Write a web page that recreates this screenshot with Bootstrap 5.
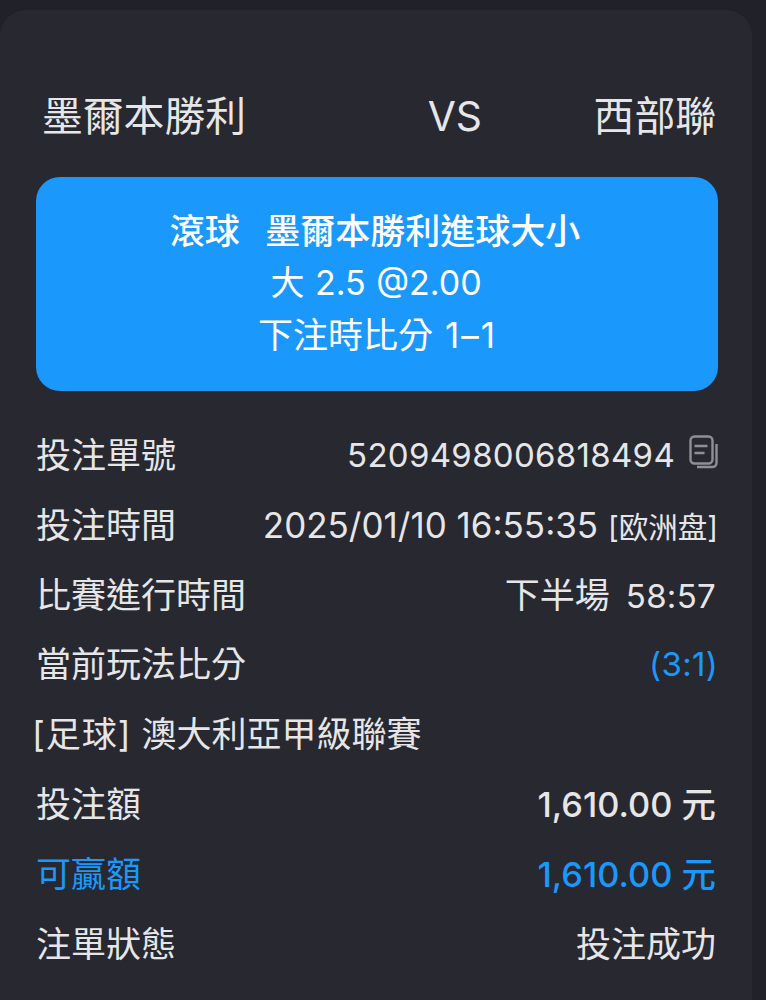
<!DOCTYPE html>
<html>
<head>
    <title>注單詳情</title>
    <link href="https://cdn.jsdelivr.net/npm/bootstrap@5.3.0/dist/css/bootstrap.min.css" rel="stylesheet">
    <style>
        html, body {
            height: 1000px;
            overflow: hidden;
        }
        body {
            background-color: #202129;
            font-family: "Inter", "Noto Sans CJK TC", sans-serif;
            color: #e6e6e8;
            margin: 0;
        }
        .sheet {
            margin: 10px 14px 0 0;
            height: 990px;
            padding: 0 34px 0 36px;
            background-color: #272830;
            border-radius: 26px 26px 0 0;
        }
        .teams {
            padding: 0 2px 0 6px;
            height: 167px;
            padding-top: 78px;
            font-size: 40.8px;
            line-height: 56px;
        }
        .teams-vs {
            margin-left: 70px;
        }
        .bet-box {
            height: 214px;
            background-color: #1a98fb;
            border-radius: 24px;
            color: #fff;
            font-size: 35px;
            line-height: 52px;
            padding-top: 28px;
        }
        .bet-title {
            font-weight: 500;
            word-spacing: 16px;
            margin-left: -4px;
        }
        .bet-odds {
            font-size: 34px;
            word-spacing: 1px;
            margin-left: -2px;
        }
        .bet-score {
            word-spacing: 2px;
            margin-left: 1px;
        }
        .score-val {
            letter-spacing: 2px;
        }
        .rows {
            padding: 30px 2px 0 0;
        }
        .info-row {
            height: 69.8px;
            font-size: 35px;
            line-height: 69px;
        }
        .num {
            font-size: 33px;
            letter-spacing: 0.3px;
        }
        .flush {
            margin-right: -2px;
        }
        .period {
            margin-right: 16px;
        }
        .accent {
            color: #1a98fb;
        }
        .strong-val {
            font-size: 34.4px;
            font-weight: 500;
        }
        .tag {
            font-size: 29.5px;
        }
        .copy-icon {
            width: 29px;
            height: 34px;
            margin-left: 14px;
            margin-top: 14px;
        }
        .league {
            margin-left: -4px;
        }
        .league-tag {
            letter-spacing: 1px;
        }
    </style>
</head>
<body>
    <div class="sheet">
        <div class="teams d-flex justify-content-between">
            <span>墨爾本勝利</span>
            <span class="teams-vs">VS</span>
            <span>西部聯</span>
        </div>
        <div class="bet-box text-center">
            <div class="bet-title">滾球 墨爾本勝利進球大小</div>
            <div class="bet-odds">大 2.5 @2.00</div>
            <div class="bet-score">下注時比分 <span class="score-val">1–1</span></div>
        </div>
        <div class="rows">
            <div class="info-row d-flex justify-content-between">
                <span>投注單號</span>
                <span class="d-flex align-items-start flush"><span class="num">5209498006818494</span>
                    <svg class="copy-icon" viewBox="0 0 29 34" fill="none" stroke="#8f9096" stroke-width="2.4">
                        <rect x="1.5" y="1.5" width="22" height="27" rx="4"/>
                        <path d="M27.5 9v19a4 4 0 0 1-4 4H8"/>
                        <path d="M5.5 11h13M5.5 18h10"/>
                    </svg>
                </span>
            </div>
            <div class="info-row d-flex justify-content-between">
                <span>投注時間</span>
                <span class="flush">2025/01/10 16:55:35 <span class="tag">[欧洲盘]</span></span>
            </div>
            <div class="info-row d-flex justify-content-between">
                <span>比賽進行時間</span>
                <span><span class="period">下半場</span><span class="num">58:57</span></span>
            </div>
            <div class="info-row d-flex justify-content-between">
                <span>當前玩法比分</span>
                <span class="accent num flush">(3:1)</span>
            </div>
            <div class="info-row league"><span class="league-tag">[足球]</span> 澳大利亞甲級聯賽</div>
            <div class="info-row d-flex justify-content-between">
                <span>投注額</span>
                <span class="strong-val">1,610.00 元</span>
            </div>
            <div class="info-row d-flex justify-content-between accent">
                <span>可贏額</span>
                <span class="strong-val">1,610.00 元</span>
            </div>
            <div class="info-row d-flex justify-content-between">
                <span>注單狀態</span>
                <span>投注成功</span>
            </div>
        </div>
    </div>
    <script src="https://cdn.jsdelivr.net/npm/bootstrap@5.3.0/dist/js/bootstrap.bundle.min.js"></script>
</body>
</html>
